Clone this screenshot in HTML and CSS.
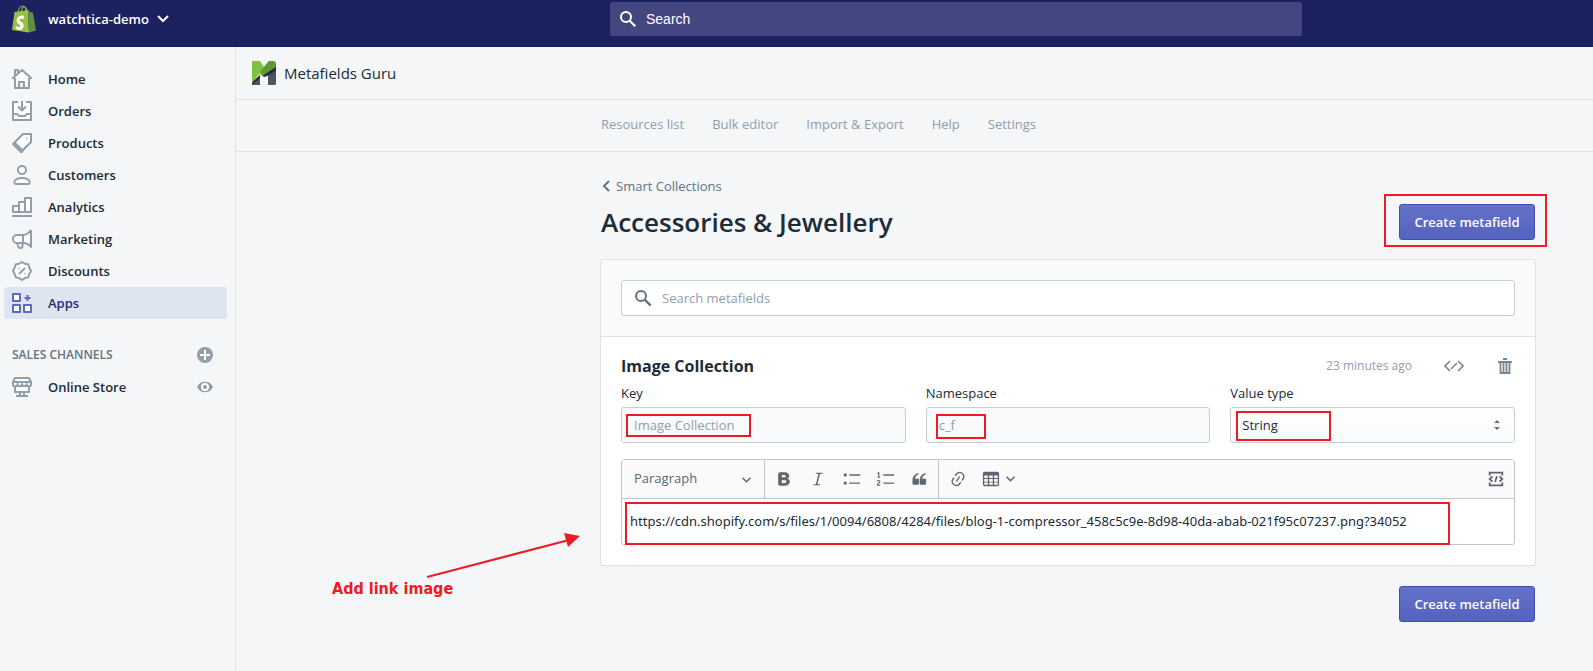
FILE: index.html
```html
<!DOCTYPE html>
<html lang="en">
<head>
<meta charset="utf-8">
<title>Metafields Guru</title>
<link rel="stylesheet" href="styles.css">
</head>
<body>
<header class="topbar">
  <button class="store" type="button">
    <svg class="bag" width="24" height="28" viewBox="0 0 24 28" aria-hidden="true">
      <path d="M6 8C6.500 3 9 1 11 1s3 2 3 6M9 7c.5-4 2.500-5.500 4-5 1.500.5 2 2.500 2 5" fill="none" stroke="#7fa93c" stroke-width="1.200"/>
      <path d="M2.500 7 16 5l1 22.500L0 25z" fill="#95bf47"/>
      <path d="M16 5l2 2 3 .5L24 25.500l-7 2z" fill="#5e8e3e"/>
      <path d="M12.200 11.200l-.9 3s-1-.5-2.100-.5c-1.700.1-1.700 1.100-1.700 1.300.1 1.500 3.900 1.800 4.200 5.300.2 2.700-1.400 4.500-3.800 4.700-2.800.2-4.300-1.500-4.300-1.500l.6-2.500s1.500 1.200 2.800 1.100c.8-.1 1.100-.7 1.100-1.200-.1-1.900-3.200-1.800-3.400-4.900-.2-2.600 1.500-5.300 5.200-5.500 1.500-.1 2.300.7 2.300.7z" fill="#fff"/>
    </svg>
    <span>watchtica-demo</span>
    <svg width="12" height="8" viewBox="0 0 12 8" aria-hidden="true"><path d="M1 1l5 5 5-5" fill="none" stroke="#fff" stroke-width="2"/></svg>
  </button>
  <label class="global-search">
    <svg width="16" height="16" viewBox="0 0 16 16" aria-hidden="true"><circle cx="6" cy="6" r="5" fill="none" stroke="#fff" stroke-width="2"/><path d="M9.700 9.700l5.600 5.600" stroke="#fff" stroke-width="2.200"/></svg>
    <input type="search" placeholder="Search" aria-label="Search">
  </label>
</header>
<div class="shell">
  <nav class="sidebar" aria-label="Main">
    <a class="nav-item" href="#"><svg class="ico" viewBox="0 0 20 20"><path d="M3 9v10h14V9M1 10V9l9-8 9 8v1M3 7V1h3v3M7 18v-5h5v5"/></svg>Home</a>
    <a class="nav-item" href="#"><svg class="ico" viewBox="0 0 20 20"><path d="M6 1H1v18h18V1h-5M1 13h4l2 2h6l2-2h4M10 0v9M6 5.500l4 4 4-4"/></svg>Orders</a>
    <a class="nav-item" href="#"><svg class="ico" viewBox="0 0 20 20"><path d="M11 1h8v8l-8.500 8.500L2.500 9.500zM2.500 9.500L1 11l8.500 8.500 1.500-2"/><path d="M14.500 5.500h1"/></svg>Products</a>
    <a class="nav-item" href="#"><svg class="ico" viewBox="0 0 20 20"><circle cx="10" cy="5" r="4"/><path d="M4 19c-2 0-2-2-1-3.500 1.500-2 4-2.500 7-2.500s5.500.5 7 2.500c1 1.500 1 3.500-1 3.500z"/></svg>Customers</a>
    <a class="nav-item" href="#"><svg class="ico" viewBox="0 0 20 20"><path d="M0 19h20M1 15V9h6v6zM7 15V5h6v10zM13 15V1h6v14z"/></svg>Analytics</a>
    <a class="nav-item" href="#"><svg class="ico" viewBox="0 0 20 20"><path d="M19 1v17c-2-3-5-4-8-4H5a4 4 0 0 1 0-8h6c3 0 6-2 8-5M11 6v8M5 14l1.500 4c.7 1.500 4 1.500 4-.5V14"/></svg>Marketing</a>
    <a class="nav-item" href="#"><svg class="ico" viewBox="0 0 20 20"><path d="M10 1l2.800 1.700 3.400.5 1 3.100L19 10l-1.800 3.200-1 3.100-3.400.8L10 19l-2.800-1.900-3.400-.8-1-3.100L1 10l1.800-3.700 1-3.100 3.400-.5z"/><path d="M7 13l6-6M6.500 7.500h1M12.500 12.500h1"/></svg>Discounts</a>
    <a class="nav-item active" href="#" aria-current="page"><svg class="ico" viewBox="0 0 20 20"><path d="M1 1h7v7H1zM1 12h7v7H1zM12 12h7v7h-7zM15.500 2v6M12.500 5h6"/></svg>Apps</a>
    <div class="nav-heading">
      <span>SALES CHANNELS</span>
      <button class="plain" type="button" aria-label="Add sales channel"><svg width="16" height="16" viewBox="0 0 16 16"><circle cx="8" cy="8" r="8" fill="#919eab"/><path d="M8 3v10M3 8h10" stroke="#fff" stroke-width="2"/></svg></button>
    </div>
    <div class="nav-row">
      <a class="nav-item" href="#"><svg class="ico" viewBox="0 0 20 20"><path d="M3 10v5h14v-5M8 15v3M12 15v3M4 19h12"/><path d="M3 1h14l2 4v2c0 3-4.500 3-4.500 0 0 3-4.500 3-4.500 0 0 3-4.500 3-4.500 0C5.500 10 1 10 1 7V5zM1 5h18"/></svg>Online Store</a>
      <button class="plain" type="button" aria-label="View online store"><svg width="16" height="16" viewBox="0 0 16 16"><path d="M0 8c3-7 13-7 16 0-3 7-13 7-16 0z" fill="#919eab"/><circle cx="8" cy="8" r="3" fill="none" stroke="#fff" stroke-width="2"/></svg></button>
    </div>
  </nav>
  <div class="main">
    <div class="appbar">
      <svg width="24" height="24" viewBox="0 0 24 24" aria-hidden="true">
        <path d="M0 0h8l4 6 5-6h5l2 2v4L11 15l-4-2-7 9z" fill="#7fc241"/>
        <path d="M12 6l5-6h5l2 2v4L11 14 8 11z" fill="#5b9a35"/>
        <path d="M0 24l1-4 7-6v10zM16 11l8-5v17l-1 1h-7z" fill="#4c5561"/>
        <path d="M0 22l8-8v3l-8 7zM10 15l14-9v4l-11 6z" fill="#252f3a"/>
      </svg>
      <span>Metafields Guru</span>
    </div>
    <nav class="tabs" aria-label="App">
      <a href="#">Resources list</a><a href="#">Bulk editor</a><a href="#">Import &amp; Export</a><a href="#">Help</a><a href="#">Settings</a>
    </nav>
    <main class="page">
      <a class="back" href="#"><svg width="8" height="12" viewBox="0 0 8 12" aria-hidden="true"><path d="M7 1L2 6l5 5" fill="none" stroke="#637381" stroke-width="2"/></svg>Smart Collections</a>
      <div class="title-row">
        <h1>Accessories &amp; Jewellery</h1>
        <div class="marked"><button class="primary" type="button">Create metafield</button><span class="mark mark-button"></span></div>
      </div>
      <section class="card">
        <div class="card-search">
          <label class="search-field">
            <svg width="17" height="17" viewBox="0 0 17 17" aria-hidden="true"><circle cx="6" cy="6" r="5" fill="none" stroke="#637381" stroke-width="2"/><path d="M9.700 9.700l6 6" stroke="#637381" stroke-width="2.400"/></svg>
            <input type="search" placeholder="Search metafields" aria-label="Search metafields">
          </label>
        </div>
        <div class="card-body">
          <div class="field-head">
            <h2>Image Collection</h2>
            <span class="time">23 minutes ago</span>
            <button class="plain code" type="button" aria-label="Show code"><svg width="20" height="12" viewBox="0 0 20 12"><path d="M6 1L1 6l5 5M14 1l5 5-5 5M13 3l-6 6" fill="none" stroke="#798590" stroke-width="1.600"/></svg></button>
            <button class="plain trash" type="button" aria-label="Delete"><svg width="14" height="16" viewBox="0 0 14 16"><path d="M5 1h4M0 4h14M2.500 4v11h9V4M5.500 5v10M8.500 5v10" fill="none" stroke="#798590" stroke-width="1.800"/></svg></button>
          </div>
          <div class="fields">
            <div class="field">
              <label for="key">Key</label>
              <div class="control"><input id="key" type="text" value="Image Collection" disabled><span class="mark mark-key"></span></div>
            </div>
            <div class="field">
              <label for="namespace">Namespace</label>
              <div class="control"><input id="namespace" type="text" value="c_f" disabled><span class="mark mark-namespace"></span></div>
            </div>
            <div class="field">
              <label for="type">Value type</label>
              <div class="control">
                <select id="type"><option>String</option></select>
                <svg class="updown" width="6" height="10" viewBox="0 0 6 10" aria-hidden="true"><path d="M0 3l3-3 3 3zM0 7l3 3 3-3z" fill="#637381"/></svg>
                <span class="mark mark-type"></span>
              </div>
            </div>
          </div>
          <div class="editor">
            <div class="toolbar">
              <div class="style-picker">
                <select aria-label="Text style"><option>Paragraph</option></select>
                <svg class="caret" width="9" height="6" viewBox="0 0 9 6" aria-hidden="true"><path d="M.5.800l4 4 4-4" fill="none" stroke="#5d6670" stroke-width="1.500"/></svg>
              </div>
              <div class="tools">
                <button type="button" aria-label="Bold"><svg viewBox="0 0 20 20"><path d="M10.187 17H5.773c-.637 0-1.092-.138-1.364-.415-.273-.277-.409-.718-.409-1.323V4.738c0-.617.14-1.062.419-1.332.279-.27.73-.406 1.354-.406h4.680c.69 0 1.288.041 1.793.124.506.083.96.242 1.360.478.341.197.644.447.906.75a3.262 3.262 0 0 1 .808 2.162c0 1.401-.722 2.426-2.167 3.075C15.050 10.175 16 11.315 16 13.010a3.756 3.756 0 0 1-2.296 3.504 6.100 6.100 0 0 1-1.517.377c-.571.073-1.238.11-2 .11zm-.217-6.217H7v4.087h3.069c1.977 0 2.965-.69 2.965-2.072 0-.707-.256-1.220-.768-1.537-.512-.319-1.277-.478-2.296-.478zM7 5.130v3.619h2.606c.729 0 1.292-.067 1.690-.2a1.600 1.600 0 0 0 .91-.765c.165-.267.247-.566.247-.897 0-.707-.26-1.176-.778-1.409-.519-.232-1.310-.348-2.375-.348H7z" stroke="currentColor"/></svg></button>
                <button type="button" aria-label="Italic"><svg viewBox="0 0 20 20"><path d="M9.586 14.633l.021.004c-.036.335.095.655.393.962.082.083.173.15.274.201h1.474a.6.6 0 1 1 0 1.200H5.304a.6.6 0 0 1 0-1.200h1.150c.474-.07.809-.182 1.005-.334.157-.122.291-.32.404-.597l2.416-9.550a1.053 1.053 0 0 0-.281-.823 1.120 1.120 0 0 0-.442-.296H8.150a.6.6 0 0 1 0-1.200h6.443a.6.6 0 1 1 0 1.200h-1.195c-.376.056-.65.155-.823.296-.215.175-.423.439-.623.79l-2.366 9.347z"/></svg></button>
                <button type="button" aria-label="Bulleted list"><svg viewBox="0 0 20 20"><circle cx="2.500" cy="5.500" r="1.800"/><circle cx="2.500" cy="14.500" r="1.800"/><path d="M7 4.750h12v1.500H7zM7 13.750h12v1.500H7z"/></svg></button>
                <button type="button" aria-label="Numbered list"><svg viewBox="0 0 20 20"><path d="M7 4.750h12v1.500H7zM7 13.750h12v1.500H7z"/><path d="M.5 4L2 3v5M.5 8h3M.2 13c0-1.800 3-1.800 3 0 0 1.500-3 2.500-3 4h3.300" fill="none" stroke="currentColor" stroke-width="1.200"/></svg></button>
                <button type="button" aria-label="Block quote"><svg viewBox="0 0 20 20"><path d="M2 10.423a6.500 6.500 0 0 1 6.056-6.408l.038.67C5.448 5.423 4.354 7.663 4.220 10H8c.552 0 .5.432.5.986v4.511c0 .554-.448.503-1 .503h-5c-.552 0-.5-.449-.5-1.003v-4.574zm8 0a6.500 6.500 0 0 1 6.056-6.408l.038.67c-2.646.739-3.740 2.979-3.873 5.315h3.779c.552 0 .5.432.5.986v4.511c0 .554-.448.503-1 .503h-5c-.552 0-.5-.449-.5-1.003v-4.574z" stroke="currentColor" stroke-width=".6"/></svg></button>
              </div>
              <div class="tools">
                <button type="button" aria-label="Link"><svg viewBox="0 0 20 20"><path d="M11.077 15l.991-1.416a.75.75 0 1 1 1.229.86l-1.148 1.640a.748.748 0 0 1-.217.206 5.251 5.251 0 0 1-8.503-5.955.741.741 0 0 1 .12-.274l1.147-1.639a.75.75 0 1 1 1.228.86L4.933 10.700l.006.003a3.750 3.750 0 0 0 6.132 4.294l.006.004zm5.494-5.335a.748.748 0 0 1-.12.274l-1.147 1.639a.75.75 0 1 1-1.228-.86l.86-1.230a3.750 3.750 0 0 0-6.144-4.301l-.86 1.229a.75.75 0 0 1-1.229-.86l1.148-1.640a.748.748 0 0 1 .217-.206 5.251 5.251 0 0 1 8.503 5.955zm-4.563-2.532a.75.75 0 0 1 .184 1.045l-3.155 4.505a.75.75 0 1 1-1.229-.86l3.155-4.506a.75.75 0 0 1 1.045-.184z"/></svg></button>
                <button class="table-tool" type="button" aria-label="Insert table"><svg viewBox="0 0 20 20"><path fill-rule="evenodd" d="M3 2h14a2 2 0 0 1 2 2v12a2 2 0 0 1-2 2H3a2 2 0 0 1-2-2V4a2 2 0 0 1 2-2zM2.500 6v3h4V6zM8 6v3h4V6zM13.500 6v3h4V6zM2.500 10v3h4v-3zM8 10v3h4v-3zM13.500 10v3h4v-3zM2.500 14v2.500h4V14zM8 14v2.500h4V14zM13.500 14v2.500h4V14z"/></svg><svg class="caret" viewBox="0 0 9 6"><path d="M.5.800l4 4 4-4" fill="none" stroke="#5d6670" stroke-width="1.500"/></svg></button>
              </div>
              <div class="tools source">
                <button type="button" aria-label="Edit source"><svg viewBox="0 0 20 20"><path d="M3 6V3h14v3M3 14v3h14v-3M6 7l-3 3 3 3M14 7l3 3-3 3M11 7l-2 6" fill="none" stroke="currentColor" stroke-width="2"/></svg></button>
              </div>
            </div>
            <div class="editor-body">
              <p contenteditable="true" role="textbox" aria-label="Value">https://cdn.shopify.com/s/files/1/0094/6808/4284/files/blog-1-compressor_458c5c9e-8d98-40da-abab-021f95c07237.png?34052</p>
              <span class="mark mark-value"></span>
              <div class="note">
                <svg width="154" height="46" viewBox="0 0 154 46" aria-hidden="true"><path d="M0 44L142 7" stroke="#ed1c24" stroke-width="2"/><path d="M137 0l16 3-12 11z" fill="#ed1c24"/></svg>
                <span>Add link image</span>
              </div>
            </div>
          </div>
        </div>
      </section>
      <div class="page-actions"><button class="primary" type="button">Create metafield</button></div>
    </main>
  </div>
</div>
</body>
</html>
```
FILE: styles.css
```css
* { box-sizing: border-box; }
body {
  margin: 0;
  min-height: 100vh;
  display: flex;
  flex-direction: column;
  background: #f4f6f8;
  color: #212b36;
  font: 13px/20px "Open Sans", "Noto Sans", sans-serif;
}
a { color: inherit; text-decoration: none; }
button, input, select { font: inherit; color: inherit; }
h1, h2, p { margin: 0; }
svg { display: block; flex: none; }
.plain { border: 0; padding: 0; background: none; }

.topbar {
  display: grid;
  grid-template-columns: 610px minmax(0, 692px);
  height: 47px;
  background: #1c2260;
  color: #fff;
}
.store {
  display: flex;
  align-items: center;
  gap: 8px;
  justify-self: start;
  height: 38px;
  padding: 0 12px;
  border: 0;
  background: none;
  font-weight: 600;
}
.store span { margin-left: 4px; }
.global-search {
  display: flex;
  align-items: center;
  gap: 10px;
  height: 34px;
  margin-top: 2px;
  padding: 0 10px;
  border-radius: 2px;
  background: #43467f;
}
.global-search input {
  flex: 1;
  padding: 0;
  border: 0;
  outline: 0;
  background: none;
  font: 14px/20px "Liberation Sans", sans-serif;
}
.global-search input::placeholder { color: #fff; opacity: 1; }

.shell { flex: 1; display: flex; }
.sidebar {
  flex: none;
  width: 236px;
  padding: 16px 8px 0 4px;
  border-right: 1px solid #dfe3e8;
}
.nav-item {
  display: flex;
  align-items: center;
  gap: 16px;
  height: 32px;
  padding: 0 8px;
  border-radius: 3px;
  font-weight: 600;
}
.ico { width: 20px; height: 20px; fill: #fff; stroke: #919eab; stroke-width: 2; stroke-linejoin: round; }
.active { background: #dfe4f1; color: #202e78; }
.active .ico { stroke: #5c6ac4; }
.nav-heading {
  display: flex;
  align-items: center;
  justify-content: space-between;
  height: 32px;
  margin-top: 20px;
  padding: 0 14px 0 8px;
  color: #637381;
  font-size: 12px;
  font-weight: 600;
}
.nav-row { display: flex; align-items: center; padding-right: 14px; }
.nav-row .nav-item { flex: 1; }

.main { flex: 1; min-width: 0; }
.appbar {
  display: flex;
  align-items: center;
  gap: 8px;
  height: 53px;
  padding: 0 16px;
  border-bottom: 1px solid #dfe3e8;
  font-size: 15px;
}
.tabs {
  display: flex;
  align-items: center;
  gap: 28px;
  height: 52px;
  padding: 0 0 4px 365px;
  border-bottom: 1px solid #dfe3e8;
  color: #919eab;
}
.page { padding: 24px 58px 40px 365px; }
.back {
  display: flex;
  align-items: center;
  gap: 6px;
  height: 20px;
  padding-left: 1px;
  color: #637381;
}
.title-row {
  display: flex;
  align-items: center;
  justify-content: space-between;
  margin: 8px 0 20px;
}
h1 { font-size: 26px; line-height: 36px; font-weight: 600; }
.marked { position: relative; }
.primary {
  height: 36px;
  width: 136px;
  padding: 0;
  border: 1px solid #3f4eae;
  border-radius: 3px;
  background: linear-gradient(#6371c7, #5563c1);
  color: #fff;
  font-weight: 600;
}
.mark { position: absolute; border: 2px solid #ed1c24; pointer-events: none; }
.mark-button { top: -10px; right: -12px; bottom: -7px; left: -15px; }

.card {
  border-radius: 3px;
  background: #fff;
  box-shadow: 0 0 0 1px #dfe3e8, 0 1px 1px 0 #b9c0c8;
}
.card-search { padding: 20px; border-bottom: 1px solid #dfe3e8; border-radius: 3px 3px 0 0; background: #f9fafb; }
.search-field {
  display: flex;
  align-items: center;
  gap: 10px;
  height: 36px;
  padding: 0 13px;
  border: 1px solid #c4cdd5;
  border-radius: 3px;
  background: #fff;
}
.search-field input { flex: 1; padding: 0; border: 0; outline: 0; background: none; }
.search-field input::placeholder { color: #919eab; opacity: 1; }
.card-body { padding: 19px 20px 20px; }
.field-head { display: flex; align-items: center; height: 20px; }
h2 { flex: 1; font-size: 16px; line-height: 20px; font-weight: 700; }
.time { color: #919eab; font-size: 12px; }
.code { margin-left: 32px; }
.trash { margin: 0 3px 0 34px; }
.fields { display: grid; grid-template-columns: repeat(3, minmax(0, 1fr)); gap: 20px; margin-top: 7px; }
.field label { display: block; margin-bottom: 4px; }
.control { position: relative; }
.control input, .control select {
  display: block;
  width: 100%;
  height: 36px;
  padding: 0 12px;
  border: 1px solid #c4cdd5;
  border-radius: 3px;
  background: #f9fafb;
}
.control input { color: #919eab; }
.control select { appearance: none; padding: 0 11px; background: linear-gradient(#fff, #f9fafb); }
.updown { position: absolute; top: 13px; right: 15px; }
.mark-key { left: 5px; top: 7px; width: 125px; height: 23px; }
.mark-namespace { left: 10px; top: 7px; width: 50px; height: 25px; }
.mark-type { left: 6px; top: 4px; width: 95px; height: 30px; }

.editor { margin-top: 16px; border: 1px solid #c4c4c4; border-radius: 3px; }
.toolbar { display: flex; height: 39px; border-bottom: 1px solid #c4c4c4; background: #fafafa; color: #5d6670; }
.style-picker { position: relative; width: 143px; border-right: 1px solid #c4c4c4; }
.style-picker select {
  appearance: none;
  width: 100%;
  height: 36px;
  padding: 0 12px;
  border: 0;
  background: none;
}
.style-picker .caret { position: absolute; right: 13px; top: 17px; }
.tools { display: flex; align-items: center; gap: 4px; padding: 0 3px 0 4px; }
.tools + .tools { border-left: 1px solid #c4c4c4; }
.tools button { display: flex; align-items: center; justify-content: center; width: 30px; height: 30px; padding: 0; border: 0; background: none; }
.tools svg { width: 18px; height: 18px; fill: currentColor; }
.tools .table-tool { width: 42px; gap: 6px; }
.tools .caret { width: 9px; height: 6px; }
.tools.source { margin-left: auto; border-left: 0; }
.editor-body { position: relative; padding: 12px 8px 13px; }
.editor-body p { font: 13px/20px "Noto Sans", sans-serif; outline: 0; overflow-wrap: anywhere; }
.mark-value { left: 3px; top: 3px; right: 64px; bottom: -1px; }
.note { position: absolute; right: 100%; top: 34px; width: 290px; }
.note svg { margin-left: 95px; }
.note span { display: block; color: #ed1c24; font: bold 16px/20px "DejaVu Sans Condensed", "DejaVu Sans", sans-serif; }
.page-actions { display: flex; justify-content: flex-end; margin-top: 21px; }
```
